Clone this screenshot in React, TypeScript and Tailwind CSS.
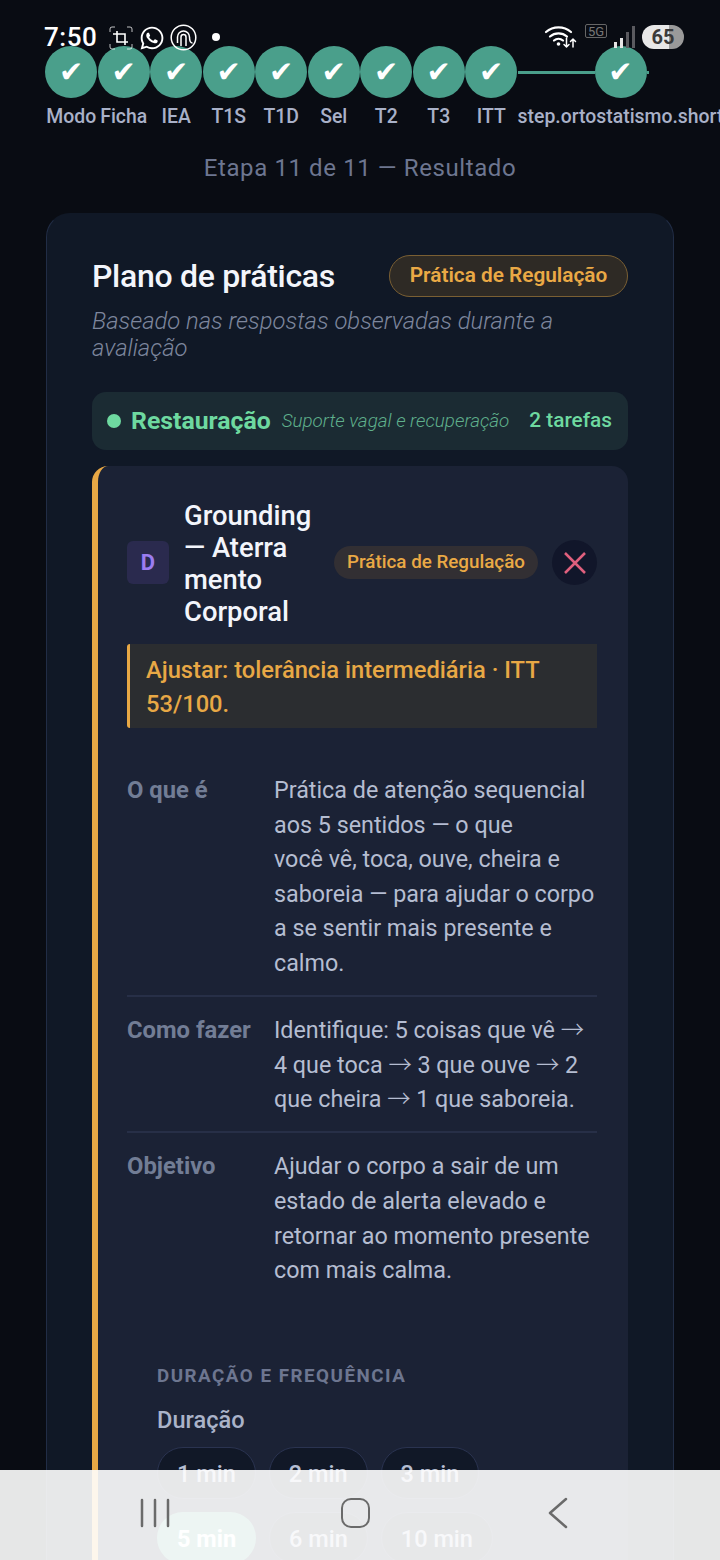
import { FaWhatsapp } from "react-icons/fa";

const steps = ["Modo", "Ficha", "IEA", "T1S", "T1D", "Sel", "T2", "T3", "ITT"];

function Check() {
  return (
    <div className="flex h-[52px] w-[52px] shrink-0 items-center justify-center rounded-full bg-[#4a9f8b] font-['DejaVu_Sans',sans-serif] text-[29px] leading-none text-white">
      ✔
    </div>
  );
}

function StatusBar() {
  return (
    <div className="absolute inset-x-0 top-0 h-[60px] text-white">
      <span className="absolute top-[21px] left-[44px] text-[26px] leading-[32px] font-medium tracking-[0.5px]">7:50</span>
      <svg className="absolute top-[26px] left-[109px]" width="24" height="24" viewBox="0 0 24 24" fill="none" stroke="currentColor">
        <path d="M1 6V3a2 2 0 0 1 2-2h3M18 1h3a2 2 0 0 1 2 2v3M23 18v3a2 2 0 0 1-2 2h-3M6 23H3a2 2 0 0 1-2-2v-3" strokeWidth="1" opacity="0.75" />
        <path d="M8 5v11h11M4 8h12v11" strokeWidth="1.6" />
      </svg>
      <FaWhatsapp className="absolute top-[25px] left-[139px]" size={26} />
      <svg className="absolute top-[24px] left-[170px]" width="27" height="27" viewBox="0 0 27 27" fill="none" stroke="currentColor" strokeWidth="1.5">
        <circle cx="13.5" cy="13.5" r="12.3" />
        <path d="M7.500 19V13a6 6 0 0 1 12 0c0 3 1 6 3 6" />
        <path d="M11 22V13a2.500 2.500 0 0 1 5 0v9" />
      </svg>
      <div className="absolute top-[33px] left-[212px] h-[8px] w-[8px] rounded-full bg-white" />
      <svg className="absolute top-[25px] left-[544px]" width="33" height="24" viewBox="0 0 33 24" fill="none" stroke="currentColor" strokeLinecap="round">
        <path d="M2 7a19 19 0 0 1 25 0" strokeWidth="2.2" />
        <path d="M6 11.500a13 13 0 0 1 17 0" strokeWidth="2.2" />
        <path d="M10 15.500a7 7 0 0 1 9 0" strokeWidth="2.2" />
        <circle cx="14.5" cy="19" r="1.8" fill="currentColor" stroke="none" />
        <path d="M22.500 13v9m-2.500-2.500 2.500 2.500 2.500-2.500M29 22v-8m-2.500 2.500 2.500-2.500 2.500 2.500" strokeWidth="1.5" />
      </svg>
      <div className="absolute top-[24px] left-[585px] flex h-[14px] w-[22px] items-center justify-center rounded-[2px] border border-[#666] text-[13px] leading-none text-[#777]">5G</div>
      <svg className="absolute top-[26px] left-[613px]" width="22" height="22" viewBox="0 0 22 22">
        <rect x="1" y="16" width="3" height="6" fill="#e5e5e5" />
        <rect x="7" y="12" width="3" height="10" fill="#e5e5e5" />
        <rect x="13" y="6" width="3" height="16" fill="#5a5a5f" />
        <rect x="19" y="0" width="3" height="22" fill="#5a5a5f" />
      </svg>
      <div className="absolute top-[25px] left-[642px] flex h-[24px] w-[42px] items-center justify-center overflow-hidden rounded-full bg-[linear-gradient(90deg,#e8e8e8_0,#e8e8e8_65%,#9a9a9a_65%,#9a9a9a_100%)] text-[20px] leading-none font-bold text-[#3a3a3a]">65</div>
    </div>
  );
}

function NavBar() {
  return (
    <div className="absolute inset-x-0 bottom-0 h-[90px] bg-white/90 text-[#6a6a6a]">
      <svg className="absolute top-[28px] left-[140px]" width="30" height="30" viewBox="0 0 30 30" fill="none" stroke="currentColor" strokeWidth="2.5" strokeLinecap="round">
        <path d="M2 2v26M15 2v26M28 2v26" />
      </svg>
      <div className="absolute top-[28px] left-[341px] h-[30px] w-[29px] rounded-[10px] border-[2.5px] border-[#6a6a6a]" />
      <svg className="absolute top-[27px] left-[546px]" width="24" height="32" viewBox="0 0 24 32" fill="none" stroke="currentColor" strokeWidth="2.5" strokeLinecap="round" strokeLinejoin="round">
        <path d="M20 2 4 16l16 14" />
      </svg>
    </div>
  );
}

function DetailRow({ label, last, children }: { label: string; last?: boolean; children: React.ReactNode }) {
  return (
    <div className={last ? "flex pt-[16px] pb-[16px]" : "flex border-b-2 border-[#272f47] pt-[16px] pb-[14.5px]"}>
      <div className="w-[147px] shrink-0 text-[23.8px] leading-[34.6px] font-bold text-[#727d95]">{label}</div>
      <div className="text-[23.3px] leading-[34.6px] text-[#b5bdd1]">{children}</div>
    </div>
  );
}

function Arrow() {
  return <span className="font-['Noto_Sans_CJK_SC',sans-serif] leading-none font-light">→</span>;
}

function Chip({ label, active }: { label: string; active?: boolean }) {
  return (
    <div
      className={
        active
          ? "flex h-[52px] items-center rounded-[26px] bg-[#4a9f8b] px-[20px] pt-[3px] text-[23.5px] font-bold text-white"
          : "flex h-[52px] items-center rounded-[26px] border border-[#2a3350] bg-[#111827] px-[19px] pt-[3px] text-[23.5px] font-medium text-[#b5bdd1]"
      }
    >
      {label}
    </div>
  );
}

export default function App() {
  return (
    <div className="relative h-[1560px] w-[720px] overflow-hidden bg-[#090c13] font-['Roboto',sans-serif]">
      <div className="flex pt-[46px] pl-[45px]">
        {steps.map((s) => (
          <div key={s} className="flex w-[52.5px] shrink-0 flex-col items-center">
            <Check />
            <span className="mt-[7px] text-[19.4px] leading-[24px] font-medium whitespace-nowrap text-[#a9b1c8]">{s}</span>
          </div>
        ))}
        <div className="flex w-[206px] shrink-0 flex-col items-center">
          <div className="flex w-full items-center">
            <div className="h-[3px] w-[77px] bg-[#4a9f8b]" />
            <Check />
            <div className="h-[3px] w-[2px] bg-[#4a9f8b]" />
          </div>
          <span className="mt-[7px] text-[19.4px] leading-[24px] font-medium whitespace-nowrap text-[#a9b1c8]">step.ortostatismo.short</span>
        </div>
      </div>

      <p className="mt-[24px] text-center text-[24px] leading-[30px] tracking-[0.6px] text-[#6d7690]">Etapa 11 de 11 — Resultado</p>

      <div className="mx-[46px] mt-[30px] rounded-[24px] border border-[#212d46] border-t-transparent bg-[#101826] px-[45px] pt-[41px]">
        <div className="flex items-center justify-between">
          <h1 className="text-[32px] leading-[42px] font-medium tracking-[-0.3px] text-[#f3f5fb]">Plano de práticas</h1>
          <span className="flex h-[42px] w-[239px] items-center justify-center rounded-full border border-[#7a5f33] bg-[#2e2a25] text-[20.8px] font-semibold text-[#eaa945]">Prática de Regulação</span>
        </div>
        <p className="mt-[11px] text-[23.8px] leading-[27px] font-light text-[#7d869d] italic">Baseado nas respostas observadas durante a avaliação</p>

        <div className="mt-[30px] flex h-[58px] items-center rounded-[14px] bg-[#1b2b33] pr-[16px] pl-[15px]">
          <div className="h-[14px] w-[14px] shrink-0 rounded-full bg-[#6ed9a0]" />
          <span className="ml-[10px] text-[24.8px] font-bold text-[#6ed9a0]">Restauração</span>
          <span className="ml-[11px] text-[18.8px] font-light text-[#5fb08c] italic">Suporte vagal e recuperação</span>
          <span className="ml-auto text-[20.8px] font-medium text-[#6ed9a0]">2 tarefas</span>
        </div>

        <div className="mt-[16px] rounded-[16px] border-l-[6px] border-[#e8a845] bg-[#1b2235] pr-[31px] pb-[40px] pl-[29px]">
          <div className="flex items-center pt-[34px]">
            <div className="mb-[3px] flex h-[43px] w-[42px] shrink-0 items-center justify-center rounded-[6px] bg-[#2a2a4e] text-[22px] font-bold text-[#9b7cf0]">D</div>
            <div className="ml-[15px] w-[140px] shrink-0 text-[27.4px] leading-[32px] font-medium text-[#f3f5fb]">
              Grounding
              <br />— Aterra
              <br />
              mento
              <br />
              Corporal
            </div>
            <span className="mb-[3px] ml-[10px] flex h-[33px] w-[204px] shrink-0 items-center justify-center rounded-full bg-[#322f33] text-[18.8px] font-medium text-[#eaa945]">Prática de Regulação</span>
            <div className="mb-[3px] ml-auto flex h-[45px] w-[45px] shrink-0 items-center justify-center rounded-full bg-[#11162a]">
              <svg width="24" height="24" viewBox="0 0 24 24" fill="none" stroke="#e0607e" strokeWidth="2.500">
                <path d="M2 2l20 20M22 2 2 22" />
              </svg>
            </div>
          </div>

          <div className="mt-[16px] rounded-l-[3px] border-l-[3px] border-[#e8a845] bg-[#2b2d30] pt-[9px] pr-[16px] pb-[7px] pl-[16px] text-[23.7px] leading-[34px] font-medium text-[#e8a845]">
            Ajustar: tolerância intermediária · ITT 53/100.
          </div>

          <div className="mt-[29px]">
            <DetailRow label="O que é">
              Prática de atenção sequencial aos 5 sentidos — o que
              <br />
              você vê, toca, ouve, cheira e saboreia — para ajudar o corpo a se sentir mais presente e calmo.
            </DetailRow>
            <DetailRow label="Como fazer">
              Identifique: 5 coisas que vê <Arrow /> 4 que toca <Arrow /> 3 que ouve <Arrow /> 2 que cheira <Arrow /> 1 que saboreia.
            </DetailRow>
            <DetailRow label="Objetivo" last>
              Ajudar o corpo a sair de um estado de alerta elevado e retornar ao momento presente com mais calma.
            </DetailRow>
          </div>

          <div className="mt-[60px] pl-[30px]">
            <div className="text-[18.8px] leading-[24px] font-bold tracking-[1.5px] text-[#6d7690]">DURAÇÃO E FREQUÊNCIA</div>
            <div className="mt-[18px] text-[23.6px] leading-[28px] font-medium text-[#aab3c9]">Duração</div>
            <div className="mt-[13px] flex w-[345px] flex-wrap gap-[13px]">
              <Chip label="1 min" />
              <Chip label="2 min" />
              <Chip label="3 min" />
              <Chip label="5 min" active />
              <Chip label="6 min" />
              <Chip label="10 min" />
            </div>
          </div>
        </div>
      </div>

      <StatusBar />
      <NavBar />
    </div>
  );
}
